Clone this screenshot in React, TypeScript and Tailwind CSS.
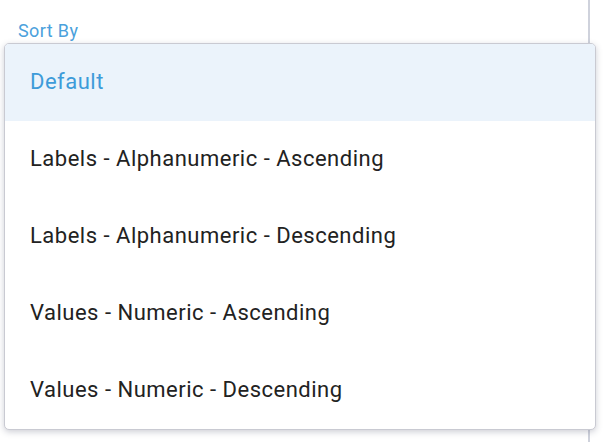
import React from "react";

const options = [
  "Default",
  "Labels - Alphanumeric - Ascending",
  "Labels - Alphanumeric - Descending",
  "Values - Numeric - Ascending",
  "Values - Numeric - Descending",
];

const SortMenu = () => {
  const selected = "Default";

  return (
    <div className="relative w-[610px] h-[442px] bg-white overflow-hidden font-['Roboto',sans-serif]">
      {/* settings panel behind the menu */}
      <div className="w-[590px] h-full border-r-2 border-[#cfd2dc] pt-[20px] pl-[18px]">
        <label className="block text-[18px] leading-[22px] tracking-[0.4px] text-[#4aa1dc]">
          Sort By
        </label>
      </div>

      {/* open dropdown list */}
      <ul className="absolute left-[4px] top-[43px] w-[592px] rounded-[5px] border border-[#c9cad2] bg-white shadow-[0_2px_6px_rgba(60,64,90,0.25)] overflow-hidden">
        {options.map((option) => (
          <li
            key={option}
            className={
              option === selected
                ? "flex items-center h-[77px] px-[25px] pb-[2px] text-[22px] tracking-[0.5px] text-[#3d9bd9] bg-[#ebf3fb]"
                : "flex items-center h-[77px] px-[25px] pb-[2px] text-[22px] tracking-[0.5px] text-[#222222]"
            }
          >
            {option}
          </li>
        ))}
      </ul>
    </div>
  );
};

export default SortMenu;
